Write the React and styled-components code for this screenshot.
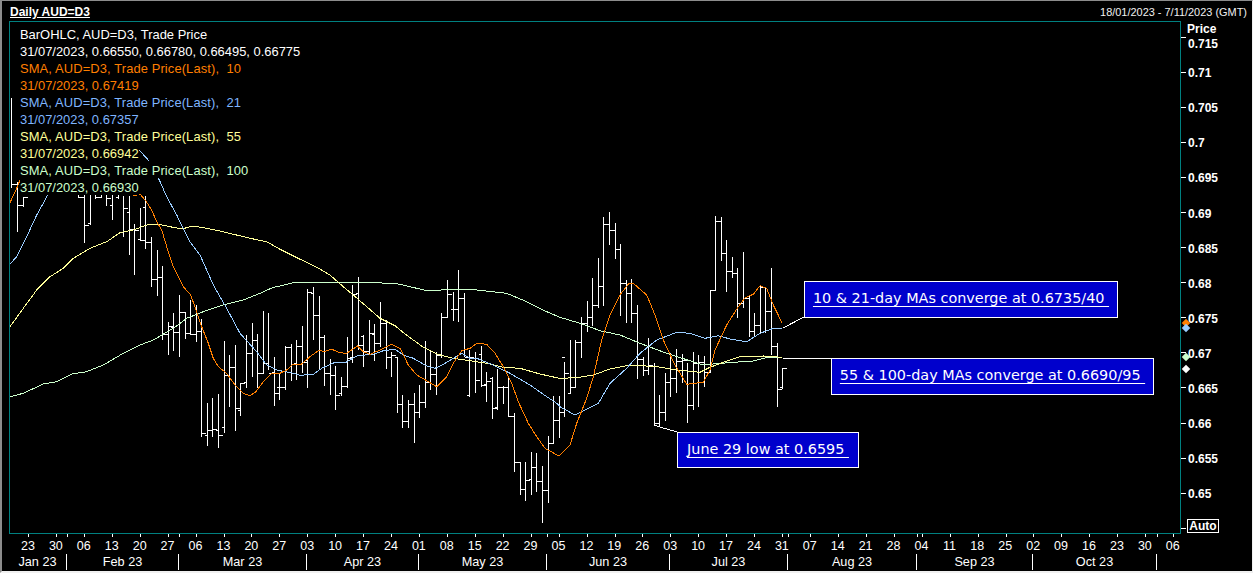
import styled, { createGlobalStyle } from "styled-components";

const GlobalStyle = createGlobalStyle`
  html, body {
    margin: 0;
    background: #000;
    overflow: hidden;
  }
`;

const sans = `"Liberation Sans", Arial, sans-serif`;

// price bars as [high, low, open, close]; y values are thirds of a pixel from a base row
const scale = (base, rows) =>
  rows.map((r) => r && r.map((v) => (v === null ? null : base + v / 3)));

const BARS = [
  ...scale(180, [
    [-246, 24, null, 12], [5, 157, 12, 75], [50, 82, 75, 50],
    null, null, null, null, null, null, null, null, null,
    [45, 55, null, 52], [45, 190, 52, 135], [45, 135, 128, null], [45, 58, null, 52],
    [45, 52, 50, null], [45, 78, null, 55], [45, 120, 75, null], [45, 58, 50, null],
    [48, 172, null, 85], [48, 225, 97, 148], [133, 285, 148, 150], [85, 183, 178, 180],
    [48, 208, 80, 185], [172, 320, 185, 297], [210, 347, 297, 292], [258, 480, 292, 462],
    [425, 525, 462, 438], [400, 513, 440, 455], [345, 530, 455, 395], [395, 478, 395, 458],
    [360, 465, 458, 462], [375, 485, 462, 452], [418, 772, 452, 760], [668, 797, 765, 750],
    [655, 770, 750, 748], [642, 805, 750, 765], [483, 758, 740, 585], [525, 680, 585, 562],
    [495, 752, 560, 685], [610, 708, 690, 608], [465, 625, 605, 520], [428, 590, 520, 480],
    [463, 625, 480, 578], [393, 578, 578, 548], [400, 570, 548, 578], [530, 678, 575, 638],
    [578, 660, 620, 622],
  ]),
  ...scale(260, [
    [258, 390, 382, 262], [252, 362, 262, 312], [240, 360, 310, 258], [197, 340, 258, 305],
    [87, 383, 300, 95], [82, 240, 100, 165], [108, 328, 165, 230], [225, 378, 232, 340],
    [297, 405, 338, 345], [318, 450, 345, 405], [352, 408, 400, 378], [232, 385, 378, 293],
    [75, 308, 292, 102], [52, 270, 100, 255], [225, 320, 227, 272], [180, 285, 272, 220],
    [192, 303, 222, 250], [127, 260, 250, 190], [180, 327, 190, 290], [275, 350, 290, 285],
    [295, 460, 290, 432], [405, 505, 432, 482], [420, 505, 482, 432], [400, 548, 432, 455],
    [375, 473, 455, 425], [243, 443, 425, 365], [273, 390, 365, 342], [275, 405, 342, 285],
    [160, 295, 285, 172], [60, 175, 172, 103], [95, 183, 148, 148], [30, 185, 148, 115],
    [100, 290, 115, 290], [270, 412, 405, 290], [275, 400, 295, 360], [258, 382, 283, 375],
    [337, 427, 372, 362], [350, 478, 355, 443], [328, 450, 440, 382], [378, 432, 382, 380],
    [350, 470, 380, 468], [458, 637, 468, 605], [605, 705, 605, 688], [605, 722, 688, 660],
    [575, 705, 658, 620], [578, 695, 620, 663], [618, 788, 663, 690], [528, 730, 690, 550],
    [408, 552, 550, 480], [408, 533, 480, 455],
  ]),
  ...scale(200, [
    [487, 650, 470, 518], [420, 582, 578, 560], [420, 565, 560, 425], [350, 473, 425, 370],
    [303, 395, 370, 352], [233, 378, 352, 315], [175, 325, 315, 258], [50, 318, 258, 72],
    [37, 135, 72, 90], [68, 177, 90, 148], [132, 348, 148, 250], [240, 370, 250, 280],
    [238, 370, 280, 338], [315, 538, 338, 478], [470, 527, 478, 510], [415, 525, 510, 495],
    [490, 675, 497, 668], [585, 680, 668, 636], [520, 662, 636, 545], [460, 592, 545, 535],
    [448, 580, 535, 482], [462, 550, 482, 480], [490, 670, 480, 615], [457, 630, 615, 490],
    [465, 620, 490, 487], [467, 562, 487, 517], [270, 520, 517, 270], [48, 272, 270, 62],
    [50, 183, 62, 160], [120, 275, 160, 213], [170, 235, 213, 218], [205, 355, 218, 310],
    [155, 325, 310, 293], [285, 410, 293, 393], [340, 410, 393, 375], [255, 400, 375, 262],
    [262, 400, 262, 333], [205, 465, 333, 437], [430, 622, 437, 568], [505, 567, 560, 505],
  ]),
];

const barX = (i) => Math.round(11.4 + 5.585 * i);

const barsPath = BARS.map((bar, i) => {
  if (!bar) return "";
  const x = barX(i) + 0.5;
  const row = (v) => Math.round(v) + 0.5;
  const [high, low, open, close] = bar;
  let d = `M${x} ${Math.round(high)}V${Math.round(low)}`;
  if (open !== null) d += `M${x - 3} ${row(open)}H${x}`;
  if (close !== null) d += `M${x} ${row(close)}H${x + 4}`;
  return d;
}).join("");

// moving average lines, same thirds-of-a-pixel notation, per crop origin
const pts = (ox, oy, list) => {
  const out = [];
  for (let i = 0; i < list.length; i += 2) {
    out.push(`${(ox + list[i] / 3).toFixed(1)},${(oy + list[i + 1] / 3).toFixed(1)}`);
  }
  return out.join(" ");
};

const SMA_10 = [
  pts(0, 180, [30, 68, 50, 25, 72, -30, 375, -30, 400, 48, 420, 42, 437, 62, 455, 90, 470, 125, 485, 150, 500, 200, 518, 255, 535, 290, 550, 320, 572, 345, 590, 395, 605, 440, 625, 490, 640, 535, 655, 560, 680, 580, 705, 615, 730, 640, 750, 647, 768, 635, 790, 605, 815, 580]),
  pts(280, 260, [0, 340, 20, 330, 40, 312, 65, 312, 90, 290, 115, 272, 135, 274, 155, 268, 180, 278, 200, 280, 232, 258, 250, 275, 270, 283, 300, 270, 335, 253, 360, 265, 385, 315, 410, 345, 440, 362, 470, 380, 500, 350, 520, 310, 545, 272, 570, 265, 590, 250, 620, 253, 645, 280, 670, 320, 695, 370, 715, 425, 745, 490, 770, 530, 795, 565, 835, 587]),
  pts(560, 200, [0, 765, 30, 735, 50, 670, 80, 595, 100, 530, 125, 420, 150, 345, 180, 285, 205, 252, 220, 250, 260, 285, 285, 345, 310, 420, 345, 495, 380, 553, 430, 547, 450, 510, 465, 450, 500, 375, 535, 320, 555, 293, 580, 283, 600, 257, 620, 265, 640, 315, 667, 370]),
].join(" ");

const SMA_21 = [
  pts(0, 180, [30, 252, 50, 230, 80, 170, 110, 105, 130, 70, 140, 50, 180, -30, 390, -120, 415, -93, 450, -54, 478, 0, 500, 50, 530, 105, 570, 185, 600, 225, 640, 315, 680, 385, 720, 460, 770, 515, 800, 555, 830, 570]),
  pts(280, 260, [0, 332, 40, 340, 60, 346, 100, 343, 125, 325, 165, 307, 198, 307, 232, 287, 280, 283, 310, 272, 345, 268, 370, 285, 400, 295, 440, 318, 465, 325, 490, 313, 545, 280, 570, 295, 590, 295, 640, 315, 690, 340, 750, 375, 800, 410, 830, 430]),
  pts(560, 200, [0, 620, 45, 645, 115, 610, 150, 550, 200, 505, 240, 460, 290, 420, 350, 397, 390, 400, 435, 415, 475, 407, 510, 417, 560, 425, 600, 400, 640, 385, 667, 385]),
].join(" ");

const SMA_55 = [
  pts(0, 180, [30, 440, 70, 385, 110, 330, 150, 290, 190, 265, 220, 235, 270, 205, 320, 185, 360, 158, 400, 150, 440, 135, 475, 133, 510, 140, 545, 147, 580, 138, 610, 143, 660, 153, 750, 175, 800, 185, 840, 208, 900, 238]),
  pts(280, 260, [65, 0, 110, 22, 150, 45, 190, 80, 220, 105, 260, 140, 300, 175, 345, 197, 375, 222, 400, 240, 430, 262, 470, 282, 520, 295, 570, 302, 620, 310, 670, 322, 720, 325, 780, 342, 830, 353]),
  pts(560, 200, [0, 535, 50, 533, 100, 525, 150, 507, 210, 495, 290, 500, 350, 510, 420, 517, 450, 502, 490, 487, 540, 470, 580, 470, 610, 468, 667, 472]),
].join(" ");

const SMA_100 = [
  pts(0, 180, [30, 650, 70, 640, 130, 612, 170, 605, 215, 582, 260, 575, 310, 555, 370, 520, 420, 495, 460, 480, 520, 445, 560, 415, 610, 395, 670, 375, 730, 360, 780, 340, 820, 322]),
  pts(280, 260, [0, 78, 40, 68, 75, 68, 290, 68, 355, 72, 445, 93, 510, 88, 590, 90, 680, 100, 740, 125, 800, 155]),
  pts(560, 200, [0, 352, 60, 370, 120, 392, 180, 405, 240, 430, 320, 460, 420, 492, 460, 492, 520, 487, 580, 483, 620, 473, 667, 472]),
].join(" ");

const LEGEND = [
  ["#ffffff", "BarOHLC, AUD=D3, Trade Price"],
  ["#ffffff", "31/07/2023, 0.66550, 0.66780, 0.66495, 0.66775"],
  ["#ff7f00", "SMA, AUD=D3, Trade Price(Last),  10"],
  ["#ff7f00", "31/07/2023, 0.67419"],
  ["#7fb5ff", "SMA, AUD=D3, Trade Price(Last),  21"],
  ["#7fb5ff", "31/07/2023, 0.67357"],
  ["#ffff99", "SMA, AUD=D3, Trade Price(Last),  55"],
  ["#ffff99", "31/07/2023, 0.66942"],
  ["#ccffcc", "SMA, AUD=D3, Trade Price(Last),  100"],
  ["#ccffcc", "31/07/2023, 0.66930"],
];

const WEEKS = ["23", "30", "06", "13", "20", "27", "06", "13", "20", "27", "03", "10", "17", "24", "01", "08", "15", "22", "29", "05", "12", "19", "26", "03", "10", "17", "24", "31", "07", "14", "21", "28", "04", "11", "18", "25", "02", "09", "16", "23", "30", "06"];

const MONTHS = [
  ["Jan 23", 58], ["Feb 23", 112], ["Mar 23", 128], ["Apr 23", 112], ["May 23", 128],
  ["Jun 23", 123], ["Jul 23", 118], ["Aug 23", 129], ["Sep 23", 116], ["Oct 23", 124],
];

const MONTH_EDGES = [67, 179, 307, 419, 547, 670, 788, 917, 1033, 1157];

const PRICES = ["0.71", "0.705", "0.7", "0.695", "0.69", "0.685", "0.68", "0.675", "0.67", "0.665", "0.66", "0.655", "0.65"];

const Page = styled.div`
  box-sizing: border-box;
  width: 1253px;
  height: 573px;
  display: flex;
  flex-direction: column;
  background: #000;
  color: #fff;
  font-family: ${sans};
  border-top: 1px solid #8c8c8c;
  border-left: 2px solid #8c8c8c;
  border-right: 1px solid #f0f0f0;
  border-bottom: 2px solid #f0f0f0;
  overflow: hidden;
`;

const TitleBar = styled.header`
  box-sizing: border-box;
  height: 20px;
  flex: none;
  display: flex;
  align-items: center;
  justify-content: space-between;
  padding: 2px 5px 0 8px;
`;

const Title = styled.span`
  font-size: 12px;
  font-weight: bold;
  text-decoration: underline;
`;

const Range = styled.span`
  font-size: 10.95px;
  color: #f0f0f0;
`;

const Body = styled.div`
  flex: 1;
  display: flex;
  min-height: 0;
`;

const ChartColumn = styled.div`
  width: 1179px;
  flex: none;
  padding-left: 7px;
  box-sizing: border-box;
`;

const Plot = styled.div`
  position: relative;
  width: 1172px;
  height: 513px;
  box-sizing: border-box;
  border: 1px solid #008080;
`;

const PlotSvg = styled.svg`
  display: block;
  width: 1170px;
  height: 511px;
  shape-rendering: crispEdges;
`;

const Legend = styled.div`
  position: absolute;
  left: 10px;
  top: 3px;
  display: flex;
  flex-direction: column;
  align-items: flex-start;
`;

const LegendRow = styled.div`
  box-sizing: border-box;
  height: 17px;
  line-height: 17px;
  padding-top: 1px;
  font-size: 12.93px;
  letter-spacing: ${(p) => (p.$wide ? "0.11px" : "0")};
  white-space: pre;
  background: #000;
  color: ${(p) => p.$color};
`;

const Note = styled.div`
  position: absolute;
  left: ${(p) => p.$left}px;
  top: ${(p) => p.$top}px;
  width: ${(p) => p.$width}px;
  height: ${(p) => p.$height}px;
  box-sizing: border-box;
  display: flex;
  align-items: center;
  justify-content: center;
  padding-bottom: 3px;
  background: #0000cc;
  border: 1px solid #fff;
  color: #fff;
  font-family: "DejaVu Sans", Verdana, sans-serif;
  font-size: 14.4px;
  text-decoration: underline;
  text-underline-offset: 3px;
  white-space: pre;
`;

const TickStrip = styled.svg`
  display: block;
  width: 1172px;
  height: 4px;
  shape-rendering: crispEdges;
`;

const WeekRow = styled.div`
  display: flex;
  height: 15px;
  margin: 1px 0 0 5px;
`;

const Week = styled.span`
  flex: 0 0 27.93px;
  text-align: center;
  font-size: 12.5px;
  line-height: 15px;
`;

const MonthRow = styled.div`
  display: flex;
  height: 16px;
`;

const Month = styled.span`
  flex: 0 0 ${(p) => p.$width}px;
  box-sizing: border-box;
  text-align: center;
  font-size: 12.7px;
  line-height: 16px;
  border-right: 1px solid #fff;
`;

const PriceAxis = styled.aside`
  position: relative;
  flex: 1;
  font-size: 12px;
  font-weight: bold;
`;

const AxisTitle = styled.div`
  height: 16px;
  line-height: 16px;
  padding-left: 6px;
`;

const PriceRow = styled.div`
  display: flex;
  height: ${(p) => p.$height}px;
  align-items: ${(p) => (p.$first ? "flex-start" : "center")};
`;

const Tick = styled.i`
  flex: none;
  width: 5px;
  height: 1px;
  margin-right: 2px;
  background: #fff;
`;

const PriceLabel = styled.span`
  line-height: 14px;
  padding-top: ${(p) => (p.$first ? 0 : 2)}px;
`;

const AutoButton = styled.span`
  box-sizing: border-box;
  width: 32px;
  height: 14px;
  line-height: 12px;
  margin: -5px 0 0 -1px;
  text-align: center;
  border: 1px solid #fff;
`;

const Marker = styled.i`
  position: absolute;
  left: 1.5px;
  top: ${(p) => p.$y - 21 - 3}px;
  width: 6px;
  height: 6px;
  background: ${(p) => p.$color};
  transform: rotate(45deg);
`;

export default function App() {
  const ticks = [
    ...WEEKS.map((_, i) => Math.round(28 + 27.93 * i)),
    ...MONTH_EDGES,
  ];

  return (
    <Page>
      <GlobalStyle />
      <TitleBar>
        <Title>Daily AUD=D3</Title>
        <Range>18/01/2023 - 7/11/2023 (GMT)</Range>
      </TitleBar>
      <Body>
        <ChartColumn>
          <Plot>
            <PlotSvg viewBox="10 22 1170 511">
              <path d={barsPath} stroke="#fff" fill="none" />
              <polyline points={SMA_100} stroke="#ccffcc" fill="none" />
              <polyline points={SMA_55} stroke="#ffff99" fill="none" />
              <polyline points={SMA_21} stroke="#99ccff" fill="none" />
              <polyline points={SMA_10} stroke="#ff7f00" fill="none" />
              <polyline points="783,328 804,317" stroke="#fff" fill="none" />
              <polyline points="783,358.5 831,358.5" stroke="#fff" fill="none" />
              <polyline points="654,425 660,427 677,432" stroke="#fff" fill="none" />
            </PlotSvg>
            <Legend>
              {LEGEND.map(([color, text], i) => (
                <LegendRow key={i} $color={color} $wide={text.startsWith("SMA")}>{text}</LegendRow>
              ))}
            </Legend>
            <Note $left={794} $top={259} $width={314} $height={37}>10 &amp; 21-day MAs converge at 0.6735/40 </Note>
            <Note $left={821} $top={336} $width={323} $height={37}>55 &amp; 100-day MAs converge at 0.6690/95 </Note>
            <Note $left={667} $top={410} $width={182} $height={36}>June 29 low at 0.6595 </Note>
          </Plot>
          <TickStrip viewBox="9 0 1172 4">
            <path d={ticks.map((x) => `M${x + 0.5} 0V3`).join("")} stroke="#fff" />
          </TickStrip>
          <WeekRow>
            {WEEKS.map((w, i) => (
              <Week key={i}>{w}</Week>
            ))}
          </WeekRow>
          <MonthRow>
            {MONTHS.map(([name, width]) => (
              <Month key={name} $width={width}>{name}</Month>
            ))}
          </MonthRow>
        </ChartColumn>
        <PriceAxis>
          <AxisTitle>Price</AxisTitle>
          <PriceRow $first $height={17.6}>
            <Tick />
            <PriceLabel $first>0.715</PriceLabel>
          </PriceRow>
          {PRICES.map((p) => (
            <PriceRow key={p} $height={35.1}>
              <Tick />
              <PriceLabel>{p}</PriceLabel>
            </PriceRow>
          ))}
          <PriceRow $height={35.1}>
            <Tick />
            <AutoButton>Auto</AutoButton>
          </PriceRow>
          <Marker $y={323} $color="#ff7f00" />
          <Marker $y={328} $color="#99ccff" />
          <Marker $y={357} $color="#ccffcc" />
          <Marker $y={368.5} $color="#ffffff" />
        </PriceAxis>
      </Body>
    </Page>
  );
}
